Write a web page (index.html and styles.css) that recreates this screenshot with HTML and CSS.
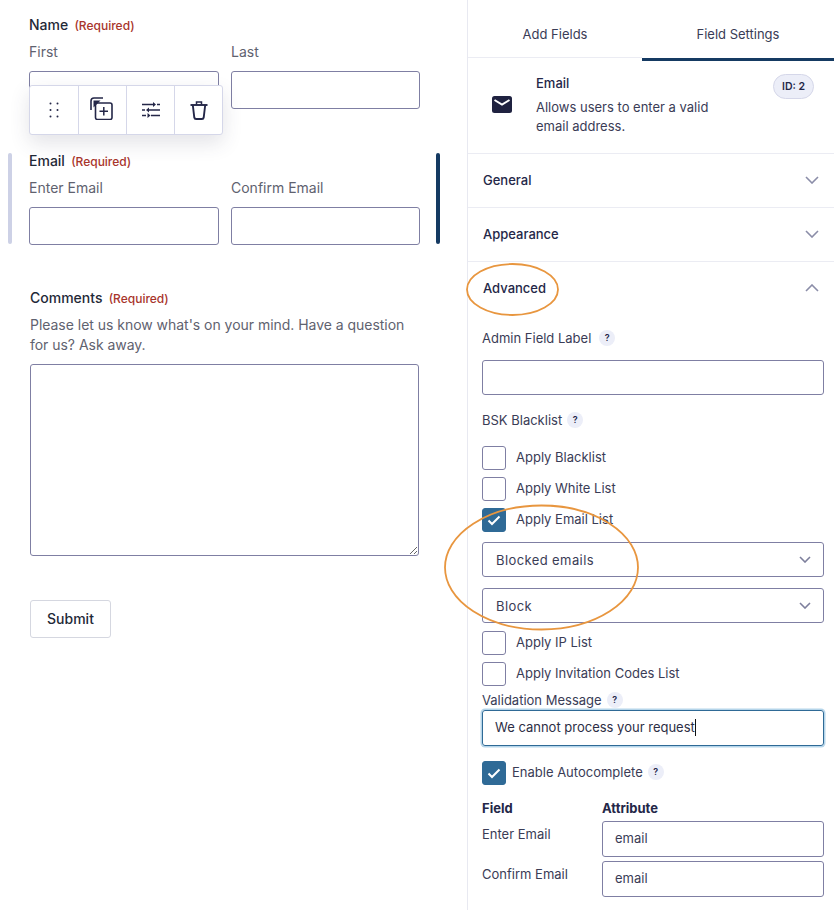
FILE: index.html
```html
<!DOCTYPE html>
<html lang="en">
<head>
<meta charset="utf-8">
<title>Form editor</title>
<link rel="stylesheet" href="styles.css">
</head>
<body>
<div class="app">
  <main class="form">
    <section class="field field-name">
      <div class="legend">Name <span class="req">(Required)</span></div>
      <div class="pair">
        <label class="sub">First<span class="box"></span></label>
        <label class="sub">Last<span class="box"></span></label>
      </div>
      <div class="toolbar">
        <span class="tool"><svg width="12" height="16" viewBox="0 0 12 16"><g fill="#242748"><circle cx="2.500" cy="1.500" r="1"/><circle cx="9.500" cy="1.500" r="1"/><circle cx="2.500" cy="8" r="1"/><circle cx="9.500" cy="8" r="1"/><circle cx="2.500" cy="14.500" r="1"/><circle cx="9.500" cy="14.500" r="1"/></g></svg></span>
        <span class="tool tool-copy"><svg width="23" height="23" viewBox="0 0 23 23" fill="none" stroke="#242748" stroke-width="1.600"><path d="M1 13V4a3 3 0 0 1 3-3h9"/><path d="M5.500 8a2 2 0 0 1 2-2H20a2 2 0 0 1 2 2v12.500a2 2 0 0 1-2 2H7.500a2 2 0 0 1-2-2z"/><path d="M13.800 10v8.500M9.500 14.300H18" stroke-width="1.500"/><path d="M3.500 3.500h7l-7 7z" fill="#242748" stroke="none"/></svg></span>
        <span class="tool"><svg width="18" height="16" viewBox="0 0 18 16" fill="none" stroke="#242748" stroke-width="1.600"><path d="M0 2.500h11M15 2.500h3M0 8h3M7 8h11M0 13.500h4M9 13.500h9"/><path d="M11 0v5l3-2.500zM7 5.500v5L4 8zM5.500 11v5l3-2.500z" fill="#242748" stroke="none"/></svg></span>
        <span class="tool"><svg width="18" height="19" viewBox="0 0 18 19" fill="none" stroke="#242748" stroke-width="1.900"><path d="M.5 4h17"/><path d="M6.500 3.500V1h5v2.500" stroke-width="1.500"/><path d="M2.800 4l1.500 12.500a1.800 1.800 0 0 0 1.800 1.500h5.800a1.800 1.800 0 0 0 1.800-1.500L15.200 4"/></svg></span>
      </div>
    </section>
    <section class="field field-email">
      <span class="bar-left"></span>
      <div class="legend">Email <span class="req">(Required)</span></div>
      <div class="pair">
        <label class="sub">Enter Email<span class="box"></span></label>
        <label class="sub">Confirm Email<span class="box"></span></label>
      </div>
      <span class="bar-right"></span>
    </section>
    <section class="field field-comments">
      <div class="legend">Comments <span class="req">(Required)</span></div>
      <p class="desc">Please let us know what's on your mind. Have a question for us? Ask away.</p>
      <textarea class="area" aria-label="Comments"></textarea>
    </section>
    <button class="submit" type="button">Submit</button>
  </main>

  <aside class="panel">
    <nav class="tabs">
      <span class="tab">Add Fields</span>
      <span class="tab tab-active">Field Settings</span>
    </nav>
    <header class="info">
      <svg class="mail" width="20" height="17" viewBox="0 0 20 17"><rect width="20" height="17" rx="2.500" fill="#1f2240"/><path d="M2.500 4l7.500 4.500L17.500 4" fill="none" stroke="#fff" stroke-width="2"/></svg>
      <div class="info-text">
        <div class="info-title">Email</div>
        <div class="info-desc">Allows users to enter a valid email address.</div>
      </div>
      <span class="badge">ID: 2</span>
    </header>
    <div class="acc"><span>General</span><svg class="chev" width="14" height="8" viewBox="0 0 14 8"><path d="M1 1l6 6 6-6" fill="none" stroke="#8b8da8" stroke-width="1.600"/></svg></div>
    <div class="acc"><span>Appearance</span><svg class="chev" width="14" height="8" viewBox="0 0 14 8"><path d="M1 1l6 6 6-6" fill="none" stroke="#8b8da8" stroke-width="1.600"/></svg></div>
    <div class="acc acc-open"><span>Advanced</span><svg class="chev" width="14" height="8" viewBox="0 0 14 8"><path d="M1 7l6-6 6 6" fill="none" stroke="#8b8da8" stroke-width="1.600"/></svg></div>
    <div class="settings">
      <div class="lab lab-admin">Admin Field Label <span class="help">?</span></div>
      <span class="box box-full"></span>
      <div class="lab lab-bsk">BSK Blacklist <span class="help">?</span></div>
      <div class="checks checks-a">
        <div class="check"><span class="cb"></span><span class="check-text">Apply Blacklist</span></div>
        <div class="check"><span class="cb"></span><span class="check-text">Apply White List</span></div>
        <div class="check"><span class="cb cb-on"><svg width="14" height="11" viewBox="0 0 14 11"><path d="M1.500 5.500l3.500 3.500 7.500-7.500" fill="none" stroke="#fff" stroke-width="2"/></svg></span><span class="check-text">Apply Email List</span></div>
      </div>
      <div class="sel sel-first"><span>Blocked emails</span><svg width="12" height="7" viewBox="0 0 12 7"><path d="M1 1l5 5 5-5" fill="none" stroke="#7d7f9c" stroke-width="1.600"/></svg></div>
      <div class="sel"><span>Block</span><svg width="12" height="7" viewBox="0 0 12 7"><path d="M1 1l5 5 5-5" fill="none" stroke="#7d7f9c" stroke-width="1.600"/></svg></div>
      <div class="checks checks-b">
        <div class="check"><span class="cb"></span><span class="check-text">Apply IP List</span></div>
        <div class="check"><span class="cb"></span><span class="check-text">Apply Invitation Codes List</span></div>
      </div>
      <div class="lab lab-valid">Validation Message <span class="help">?</span></div>
      <div class="focus-input"><span>We cannot process your request</span><i class="caret"></i></div>
      <div class="auto"><span class="cb cb-on"><svg width="14" height="11" viewBox="0 0 14 11"><path d="M1.500 5.500l3.500 3.500 7.500-7.500" fill="none" stroke="#fff" stroke-width="2"/></svg></span><span class="check-text">Enable Autocomplete</span><span class="help">?</span></div>
      <div class="grid">
        <div class="th">Field</div>
        <div class="th">Attribute</div>
        <div class="td">Enter Email</div>
        <div class="val">email</div>
        <div class="td">Confirm Email</div>
        <div class="val">email</div>
      </div>
    </div>
  </aside>
</div>
<svg class="marks" width="834" height="910" viewBox="0 0 834 910" fill="none" stroke="#e8963f" stroke-width="1.800" aria-hidden="true">
  <ellipse cx="512.500" cy="289.500" rx="45.500" ry="25.500"/>
  <ellipse cx="541.500" cy="567.500" rx="96.500" ry="62"/>
</svg>
</body>
</html>
```

FILE: styles.css
```css
* { box-sizing: border-box; }
html, body { margin: 0; padding: 0; }
body {
  width: 834px;
  height: 910px;
  overflow: hidden;
  background: #fff;
  color: #242748;
  font-family: Inter, "Liberation Sans", sans-serif;
  font-size: 14px;
  position: relative;
}
.app { display: flex; height: 910px; }

/* left form */
.form { width: 467px; flex: none; padding: 0 47px 0 29px; }
.field { position: relative; }
.field-name { height: 153px; padding-top: 16px; }
.field-email { height: 136px; }
.field-comments { padding-left: 1px; }
.legend { font-size: 14px; font-weight: 450; line-height: 18px; color: #1f2937; }
.req { font-size: 12px; line-height: 1; font-weight: 450; color: #a8352b; margin-left: 2.500px; }
.pair { display: grid; grid-template-columns: 190px 189px; column-gap: 12px; margin-top: 9px; }
.field-email .legend { line-height: 16px; }
.field-email .pair { margin-top: 10px; }
.sub { display: block; font-size: 14px; line-height: 18px; color: #5f626f; }
.box {
  display: block;
  height: 38px;
  margin-top: 10px;
  border: 1px solid #7f7fa3;
  border-radius: 3px;
  background: #fff;
}
.bar-left, .bar-right { position: absolute; top: 0; width: 4px; height: 91px; border-radius: 2px; }
.bar-left { left: -21px; background: #cdd1e6; }
.bar-right { left: 407px; background: #153a62; }

.toolbar {
  position: absolute;
  left: 0;
  top: 85px;
  z-index: 2;
  display: flex;
  width: 194px;
  height: 50px;
  background: #fff;
  border: 1px solid #d5d7e9;
  border-radius: 3px;
  box-shadow: 0 8px 20px rgba(58, 58, 87, .14);
}
.tool { display: flex; width: 48px; align-items: center; justify-content: center; border-left: 1px solid #d5d7e9; }
.tool:first-child { border-left: 0; }
.tool-copy svg { margin: 0 3px 3px 0; }

.desc { margin: 8px 0 0; font-size: 14px; letter-spacing: -.03px; line-height: 20px; color: #5f626f; width: 389px; }
.area {
  display: block;
  width: 389px;
  height: 192px;
  margin: 9px 0 0;
  border: 1px solid #7f7fa3;
  border-radius: 3px;
  background: #fff;
  outline: 0;
  padding: 0;
}
.submit {
  display: block;
  width: 81px;
  height: 38px;
  margin: 44px 0 0 1px;
  padding: 0 0 2px;
  background: #fff;
  border: 1px solid #d5d7e0;
  border-radius: 3px;
  font: 450 14px Inter, "Liberation Sans", sans-serif;
  color: #1f2937;
}

/* right panel */
.panel { width: 367px; flex: none; border-left: 1px solid #e8e9f1; }
.tabs { display: flex; height: 61px; align-items: flex-start; }
.tab {
  display: flex;
  align-items: center;
  justify-content: center;
  width: 174px;
  height: 58px;
  padding-top: 11px;
  border-bottom: 1px solid #ebecf3;
  font-size: 13px;
  color: #3a3c56;
}
.tab-active { width: 192px; height: 61px; padding-top: 9px; border-bottom: 3px solid #153a62; }
.info {
  position: relative;
  height: 93px;
  padding: 15px 0 0 68px;
  border-bottom: 1px solid #ebecf3;
}
.mail { position: absolute; left: 24px; top: 35px; }
.info-title { font-size: 13px; font-weight: 450; line-height: 15px; color: #242748; }
.info-desc { width: 190px; margin-top: 7px; font-size: 13px; line-height: 19px; color: #3a3c56; }
.badge {
  position: absolute;
  left: 305px;
  top: 13px;
  width: 41px;
  height: 25px;
  border: 1px solid #d5d7e9;
  border-radius: 13px;
  background: #eceef8;
  font-size: 10.500px;
  font-weight: 600;
  line-height: 23px;
  text-align: center;
  color: #242748;
}
.acc {
  display: flex;
  align-items: center;
  justify-content: space-between;
  height: 54px;
  padding: 0 15px 2px;
  border-bottom: 1px solid #ebecf3;
  font-size: 13px;
  font-weight: 450;
  color: #242748;
}
.acc-open { height: 52px; padding-bottom: 0; border-bottom: 0; }
.settings { padding: 0 10px 0 14px; font-size: 13px; color: #3a3c56; }
.lab { display: flex; align-items: center; gap: 5px; height: 16px; }
.lab-admin { gap: 8px; margin-top: 16px; }
.help {
  flex: none;
  width: 16px;
  height: 16px;
  border-radius: 50%;
  background: #eceef8;
  font-size: 9px;
  font-weight: 600;
  line-height: 16px;
  text-align: center;
  color: #242748;
}
.box-full { height: 35px; margin-top: 14px; }
.lab-bsk { margin-top: 17px; }
.checks { display: flex; flex-direction: column; gap: 7px; }
.checks-a { margin-top: 18px; }
.checks-b { margin-top: 8px; }
.check { display: flex; align-items: center; height: 24px; }
.check-text { margin-bottom: 2px; }
.cb {
  display: flex;
  flex: none;
  align-items: center;
  justify-content: center;
  width: 24px;
  height: 24px;
  margin-right: 10px;
  border: 1px solid #7f7fa3;
  border-radius: 3px;
  background: #fff;
}
.cb-on { background: #2f6a96; border-color: #2f6a96; }
.sel {
  display: flex;
  align-items: center;
  justify-content: space-between;
  height: 35px;
  margin-top: 11px;
  padding: 0 12px 0 13px;
  border: 1px solid #7f7fa3;
  border-radius: 3px;
  letter-spacing: .4px;
}
.sel-first { margin-top: 10px; }
.lab-valid { margin-top: 6px; }
.focus-input {
  display: flex;
  align-items: center;
  height: 36px;
  margin-top: 2px;
  padding: 0 0 2px 12px;
  border: 1px solid #2f6a96;
  border-radius: 3px;
  box-shadow: 0 0 0 1.500px #b5d5ea;
  color: #2c2e45;
}
.caret { width: 1px; height: 17px; background: #111; }
.auto { display: flex; align-items: center; height: 24px; margin-top: 15px; }
.auto .cb { margin-right: 6px; }
.auto .help { margin: 0 0 2px 5px; }
.grid {
  display: grid;
  grid-template-columns: 120px 222px;
  grid-template-rows: 17px 36px 36px;
  row-gap: 4px;
  margin-top: 15px;
}
.th { line-height: 16px; font-weight: 700; color: #242748; }
.td { line-height: 16px; padding-top: 5px; }
.val {
  height: 36px;
  padding-left: 12px;
  border: 1px solid #7f7fa3;
  border-radius: 3px;
  line-height: 32px;
}

/* hand-drawn annotation over the page */
.marks { position: absolute; left: 0; top: 0; pointer-events: none; }
```
